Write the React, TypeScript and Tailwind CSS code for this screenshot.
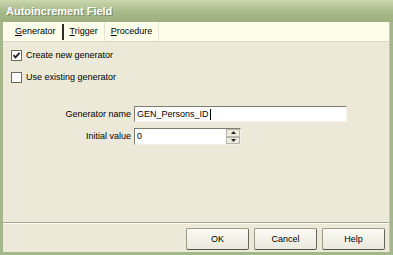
import React from "react";

const font = { fontFamily: '"Liberation Sans", Arial, sans-serif' };

function Check({ checked }: { checked?: boolean }) {
  return (
    <div className="w-[11px] h-[11px] bg-white border border-[#6b6b5c] flex items-center justify-center shrink-0">
      {checked && (
        <svg width="9" height="9" viewBox="0 0 9 9">
          <path d="M1.5 4.2 L3.5 6.4 L7.6 1.8" stroke="#1e1e1e" strokeWidth="1.8" fill="none" />
        </svg>
      )}
    </div>
  );
}

function Btn({ label }: { label: string }) {
  return (
    <div className="w-[63px] h-[22px] rounded-[2px] border border-[#9a998a] border-b-[#55554a] border-r-[#66665a] bg-gradient-to-b from-[#fbfaf5] to-[#ebe9dc] flex items-center justify-center text-[9px] text-black">
      {label}
    </div>
  );
}

export default function App() {
  return (
    <div className="w-[393px] h-[255px] flex flex-col bg-[#a3b78a] overflow-hidden" style={font}>
      {/* title bar */}
      <div className="h-[22px] shrink-0 bg-gradient-to-b from-[#cbd8ae] via-[#a9bb8b] to-[#9db07e] flex items-center pl-[6px]">
        <span className="text-[11px] font-bold text-white [text-shadow:1px_1px_0_#7a8a60]">
          Autoincrement Field
        </span>
      </div>
      <div className="flex-1 flex px-[3px] pb-[3px]">
        <div className="flex-1 flex flex-col bg-[#ece9d8] border-r border-[#c9c7b6]">
          {/* tab strip */}
          <div className="h-[20px] shrink-0 bg-[#fdfde9] border-b border-[#d8d6c4] flex items-center text-[9px] text-black">
            <div className="pl-[12px] pr-[6px] h-[16px] flex items-center border-r-2 border-[#2b2b2b]">
              <span><span className="underline">G</span>enerator</span>
            </div>
            <div className="pl-[6px] pr-[6px] h-full flex items-center border-r border-[#e6e4d2]">
              <span><span className="underline">T</span>rigger</span>
            </div>
            <div className="pl-[6px] pr-[6px] h-full flex items-center border-r border-[#e6e4d2]">
              <span><span className="underline">P</span>rocedure</span>
            </div>
          </div>
          {/* content */}
          <div className="flex-1 flex flex-col text-[9px] leading-[11px] text-black">
            <div className="flex items-center gap-[4px] pl-[8px] mt-[8px] h-[11px]">
              <Check checked />
              <span>Create new generator</span>
            </div>
            <div className="flex items-center gap-[4px] pl-[8px] mt-[11px] h-[11px]">
              <Check />
              <span>Use existing generator</span>
            </div>
            <div className="flex items-center mt-[23px]">
              <div className="w-[131px] text-right pr-[3px]">Generator name</div>
              <div className="w-[213px] h-[16px] bg-white border border-[#7c7c70] border-b-[#f2f1ea] border-r-[#f2f1ea] flex items-center pl-[2px]">
                <span>GEN_Persons_ID</span>
                <span className="w-px h-[11px] bg-black ml-[1px]" />
              </div>
            </div>
            <div className="flex items-center mt-[6px]">
              <div className="w-[131px] text-right pr-[3px]">Initial value</div>
              <div className="w-[107px] h-[17px] bg-white border border-[#7c7c70] border-b-[#f2f1ea] border-r-[#f2f1ea] flex items-center pl-[2px]">
                <span className="flex-1">0</span>
                <div className="w-[14px] h-full flex flex-col">
                  <div className="flex-1 bg-[#ecebe0] border border-[#b9b8a8] flex items-center justify-center">
                    <svg width="5" height="3" viewBox="0 0 5 3"><path d="M0 3 L2.5 0 L5 3Z" fill="#222" /></svg>
                  </div>
                  <div className="flex-1 bg-[#ecebe0] border border-[#b9b8a8] flex items-center justify-center">
                    <svg width="5" height="3" viewBox="0 0 5 3"><path d="M0 0 L2.5 3 L5 0Z" fill="#222" /></svg>
                  </div>
                </div>
              </div>
            </div>
            <div className="flex-1" />
            <div className="border-t border-[#a9a796] border-b border-b-[#fbfaf4]" />
            <div className="flex justify-end gap-[5px] pr-[4px] pt-[4px] pb-[2px]">
              <Btn label="OK" />
              <Btn label="Cancel" />
              <Btn label="Help" />
            </div>
          </div>
        </div>
      </div>
    </div>
  );
}
